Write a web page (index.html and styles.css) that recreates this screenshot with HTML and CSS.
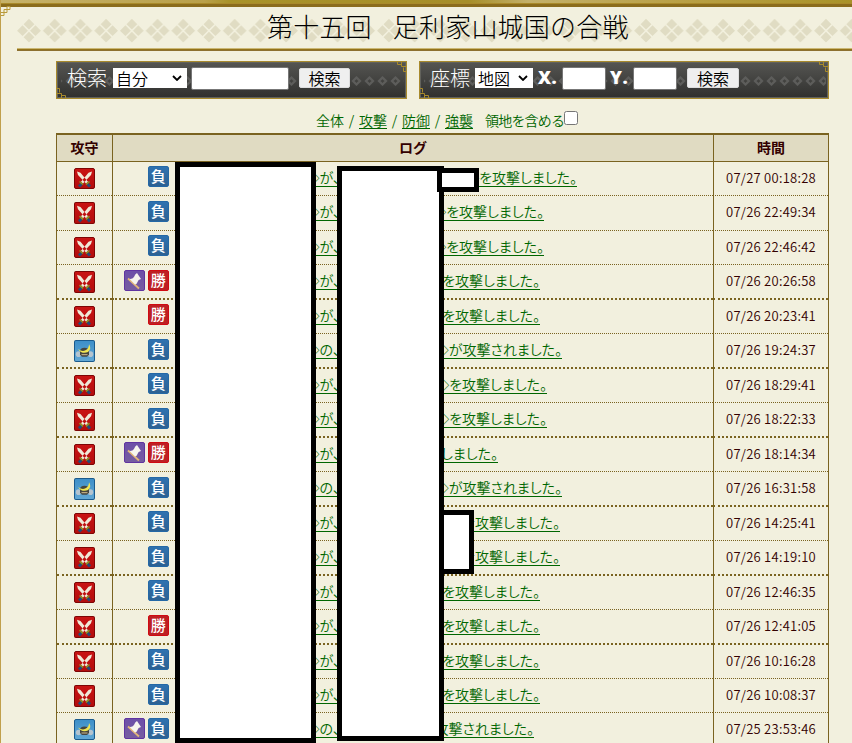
FILE: index.html
```html
<!DOCTYPE html>
<html lang="ja">
<head>
<meta charset="utf-8">
<title>合戦ログ</title>
<link rel="stylesheet" href="styles.css">
</head>
<body>
<svg width="0" height="0" class="defs" aria-hidden="true">
  <defs>
    <linearGradient id="gr" x2="0" y2="1"><stop stop-color="#c91414"/><stop offset="1" stop-color="#b30d0d"/></linearGradient>
    <linearGradient id="gb" x2="0" y2="1"><stop stop-color="#3d8fc8"/><stop offset="1" stop-color="#62a8d4"/></linearGradient>
    <linearGradient id="gp" x2="0" y2="1"><stop stop-color="#6d4fa8"/><stop offset="1" stop-color="#765da0"/></linearGradient>
    <pattern id="crest" width="25.71" height="26" x="16.15" y="0" patternUnits="userSpaceOnUse">
      <path fill="#e0dcc3" d="M12.85 .8l5.4 5.4-5.4 5.4-5.4-5.4zM12.85 13.8l5.4 5.4-5.4 5.4-5.4-5.4zM6.4 7.3l5.4 5.4-5.4 5.4L1 12.7zM19.3 7.3l5.4 5.4-5.4 5.4-5.4-5.4z"/>
    </pattern>
    <pattern id="mini" width="13" height="12" x="3" y="0" patternUnits="userSpaceOnUse">
      <path fill="none" stroke="#5d5d5b" stroke-width="2.2" d="M6.5 2.500l3.500 3.500-3.500 3.500-3.500-3.500z"/>
    </pattern>
    <symbol id="attack" viewBox="0 0 21 21">
      <rect x=".5" y=".5" width="20" height="20" rx="1.5" fill="url(#gr)" stroke="#7d0505"/>
      <path d="M5 18.500l2.500-2.500M16 18.500l-2.500-2.500" stroke="#234b78" stroke-width="3"/>
      <path d="M3 3.500l3.500 1.200 7.500 9-2 1.800-8-8.500zM18 3.500l-3.500 1.200-7.500 9 2 1.800 8-8.500z" fill="#f0e9d8"/>
      <path d="M5.500 13.500l3.500 3M15.500 13.500l-3.500 3" stroke="#8b9626" stroke-width="1.600"/>
    </symbol>
    <symbol id="defend" viewBox="0 0 21 21">
      <rect x=".5" y=".5" width="20" height="20" rx="1.5" fill="url(#gb)" stroke="#1a5a8c"/>
      <circle cx="4.500" cy="13.500" r="2.700" fill="#b4c4cf"/><circle cx="16.500" cy="13.500" r="2.700" fill="#b4c4cf"/>
      <path d="M6 11q0-3.500 4.500-3.500t4.500 3.500v3l-2 2h-5l-2-2z" fill="#46463f"/>
      <path d="M4 8.500q4 2.800 7 1.500 4-1.500 4-6 3 4-1 7.500-6 2.500-10-3z" fill="#f0e653"/>
      <path d="M7.500 14h6" stroke="#d0b88a"/>
    </symbol>
    <symbol id="flag" viewBox="0 0 21 21">
      <rect x=".5" y=".5" width="20" height="20" rx="1.500" fill="url(#gp)" stroke="#6034a0"/>
      <path d="M4 8.500l11 10" stroke="#e2b578" stroke-width="1.800"/>
      <path d="M5.500 9q3 .3 4.500-2 1-3 3-4l4 6q-3 .5-3.500 3-.5 2-2.500 2.500z" fill="#f7f5ee"/>
    </symbol>
    <symbol id="corner" viewBox="0 0 11 11">
      <path d="M.5 5.500h5v5h-5zM.5.5h3v4M5.500 7.500h4v3" fill="none" stroke="#a88a2c"/>
    </symbol>
  </defs>
</svg>
<div class="page">
  <header class="title">
    <svg class="crests" width="852" height="26" aria-hidden="true"><rect x="17" width="835" height="26" fill="url(#crest)"/></svg>
    <svg class="page-corner" viewBox="0 0 11 11" aria-hidden="true"><path d="M.5 6.500h3.500v3h-3.500M4 6.500v-3h3v3h-3M7 3.500v-3h3v3z" fill="none" stroke="#b99a3a"/></svg>
    <h1>第十五回<span class="wide"></span>足利家山城国の合戦</h1>
  </header>
  <div class="panels">
    <form class="panel search">
      <svg class="minis" aria-hidden="true"><rect width="100%" height="12" fill="url(#mini)"/></svg>
      <svg class="c bl"><use href="#corner"/></svg><svg class="c tr"><use href="#corner"/></svg>
      <span class="label">検索</span>
      <span class="select">自分<svg viewBox="0 0 10 6"><path d="M1 1l4 4 4-4"/></svg></span>
      <input class="field" aria-label="検索">
      <button type="button">検索</button>
    </form>
    <form class="panel coords">
      <svg class="minis" aria-hidden="true"><rect width="100%" height="12" fill="url(#mini)"/></svg>
      <svg class="c bl"><use href="#corner"/></svg><svg class="c tr"><use href="#corner"/></svg>
      <span class="label">座標</span>
      <span class="select">地図<svg viewBox="0 0 10 6"><path d="M1 1l4 4 4-4"/></svg></span>
      <b class="axis">X.</b><input class="field" aria-label="X">
      <b class="axis">Y.</b><input class="field" aria-label="Y">
      <button type="button">検索</button>
    </form>
  </div>
  <nav class="filter"><span>全体</span><i>/</i><u>攻撃</u><i>/</i><u>防御</u><i>/</i><u>強襲</u><label>領地を含める<input type="checkbox"></label></nav>
  <div class="log" id="log">
    <div class="row head"><div>攻守</div><div>ログ</div><div>時間</div></div>
  </div>
  <div class="mask m1"></div><div class="mask m2"></div><div class="mask m3"></div><div class="mask m4"></div>
</div>
<script src="log.js"></script>
</body>
</html>
```
FILE: styles.css
```css
* { box-sizing: border-box; }
body { margin: 0; background: #f2f0de; color: #300; font-family: "Noto Sans CJK JP", sans-serif; font-weight: 350; overflow: hidden; }
.defs { position: absolute; }
.page { position: relative; height: 743px; overflow: hidden; border-left: 1px solid #c0a04c; }
.title { position: relative; height: 51px; margin-left: -1px; border-top: 7px solid #8b6c1c; }
.title::before { content: ""; position: absolute; top: -7px; left: 0; right: 0; height: 3px; background: linear-gradient(90deg, #c6b26a 0, #b9a04a 24%, #a89228 27%, #a68e28 55%, #c3b06a 62%, #b9a045 80%, #a89228 100%); border-bottom: 1px solid #a98a2a; }
.title::after { content: ""; position: absolute; left: 17px; right: 0; bottom: 0; height: 3px; background: linear-gradient(#cbb875 33%, #94731a 33% 67%, #8c7030 67%); }
.crests { position: absolute; left: 0; top: 11px; }
.page-corner { position: absolute; left: 0; top: -1px; width: 11px; height: 11px; }
h1 { position: relative; display: flex; margin: 0; padding-left: 267px; font-size: 26px; font-weight: 300; line-height: 38px; letter-spacing: .2px; color: #000; white-space: nowrap; }
.wide { width: 21px; }
.panels { display: grid; grid-template-columns: 351px 410px; gap: 12px; margin: 10px 0 0 55px; }
.panel { position: relative; display: flex; align-items: flex-start; height: 38px; padding: 5px 0 0 9px; border: 1px solid #a88a2c; background: linear-gradient(#555552, #30302e); box-shadow: inset 0 0 0 1px #62625c; }
.panel > * { position: relative; flex: none; }
.panel > .minis { position: absolute; left: 4px; top: 13px; width: calc(100% - 6px); height: 12px; }
.panel > .c { position: absolute; width: 11px; height: 11px; }
.panel > .bl { left: -1px; bottom: -1px; }
.panel > .tr { right: -1px; top: -1px; transform: rotate(180deg); }
.label { width: 40px; margin-left: 1px; font-size: 20px; font-weight: 300; line-height: 22px; color: #fff; }
.select { display: flex; align-items: center; justify-content: space-between; width: 74px; height: 20px; margin: 1px 4px 0 6px; padding: 0 5px 0 3px; background: #fff; color: #000; font-size: 16px; line-height: 18px; }
.select svg { width: 10px; height: 6px; fill: none; stroke: #000; stroke-width: 1.8; }
.coords .select { width: 58px; margin-left: 5px; }
.field { width: 98px; height: 23px; padding: 0; border: 1px solid #777; border-radius: 2px; background: #fff; }
.coords .field { width: 44px; }
button { width: 51px; height: 20px; margin: 1px 0 0 10px; padding: 0; border: 1px solid #ddd; border-radius: 2px; background: #efefef; font: 350 16px/16px "Noto Sans CJK JP", sans-serif; color: #000; }
.coords button { width: 52px; }
.axis { width: 25px; padding-left: 1px; font: 800 18px/20px "Open Sans", sans-serif; color: #fff; letter-spacing: .5px; }
.field + .axis { width: 27px; padding-left: 4px; }
.filter { display: flex; align-items: center; height: 34px; padding: 7px 0 0 315px; color: #060; font-size: 14px; line-height: 20px; white-space: nowrap; }
.filter i { width: 15px; text-align: center; font-style: normal; }
.filter u { text-underline-offset: 2px; }
.filter label { display: flex; margin-left: 12px; letter-spacing: -.8px; }
.filter input { width: 14px; height: 14px; margin: 1px 0 0 0; }
.log { width: 773px; margin-left: 55px; border: 1px solid #7a6320; border-width: 2px 1px 0; }
.row { display: grid; grid-template-columns: 55px 601px 1fr; height: 34px; --line: 1px dotted #7a6320; }
.row:nth-child(odd) { height: 35px; }
.row:nth-child(16), .row:nth-child(17) { height: 34px; }
.row > div { border-bottom: var(--line); }
.row > div + div { border-left: 1px solid #7a6320; }
.row.thick { --line: 2px dotted #7a6320; }
.row.head { height: 27px; --line: 1px solid #7a6320; background: #e0dbc2; font-size: 14px; font-weight: 700; line-height: 24px; text-align: center; }
.side { padding: 6px 0 0 17px; }
.side svg, .flag { display: block; width: 21px; height: 21px; }
.row:nth-child(odd) .side svg { height: 22px; }
.entry { display: flex; }
.badges { display: flex; justify-content: flex-end; gap: 3px; width: 56px; margin-right: 139px; padding-top: 4px; }
.row:nth-child(odd) .badges, .row:nth-child(18) .badges { padding-top: 5px; }
.badge { width: 21px; height: 21px; border: 1px solid #2468a6; border-radius: 2px; background: linear-gradient(#2f72b0, #2d6192); color: #fff; font-size: 15px; font-weight: 500; line-height: 18px; text-align: center; text-indent: -.5px; }
.badge.win { border-color: #d00a12; background: #bd2024; }
.entry u { font-size: 14px; line-height: 31px; color: #060; white-space: nowrap; text-underline-offset: 3px; font-feature-settings: "palt"; }
.actor { width: 32px; display: flex; justify-content: flex-end; }
.result { display: flex; justify-content: flex-end; margin-left: 1px; }
.time { font-size: 13px; line-height: 32px; text-align: center; white-space: nowrap; letter-spacing: .25px; }
.mask { position: absolute; background: #fff; border: 5px solid #000; }
.m1 { left: 174px; top: 162px; width: 141px; height: 581px; }
.m2 { left: 336px; top: 166px; width: 107px; height: 575px; }
.m3 { left: 436px; top: 168px; width: 42px; height: 24px; }
.m4 { left: 438px; top: 510px; width: 35px; height: 64px; }
```
FILE: log.js
```js
// [side, flag, result, actor text, message, message width, time]
const rows = [
  ["attack", 0, "負", "が、", "◇を攻撃しました。", 236, "07/27 00:18:28"],
  ["attack", 0, "負", "が、", "◇を攻撃しました。", 203, "07/26 22:49:34"],
  ["attack", 0, "負", "が、", "◇を攻撃しました。", 203, "07/26 22:46:42"],
  ["attack", 1, "勝", "が、", "を攻撃しました。", 199, "07/26 20:26:58"],
  ["attack", 0, "勝", "が、", "を攻撃しました。", 199, "07/26 20:23:41"],
  ["defend", 0, "負", "の、", "◇が攻撃されました。", 221, "07/26 19:24:37"],
  ["attack", 0, "負", "が、", "◇を攻撃しました。", 206, "07/26 18:29:41"],
  ["attack", 0, "負", "が、", "◇を攻撃しました。", 206, "07/26 18:22:33"],
  ["attack", 1, "勝", "が、", "を攻撃しました。", 157, "07/26 18:14:34"],
  ["defend", 0, "負", "の、", "◇が攻撃されました。", 221, "07/26 16:31:58"],
  ["attack", 0, "負", "が、", "を攻撃しました。", 219, "07/26 14:25:41"],
  ["attack", 0, "負", "が、", "を攻撃しました。", 219, "07/26 14:19:10"],
  ["attack", 0, "負", "が、", "を攻撃しました。", 199, "07/26 12:46:35"],
  ["attack", 0, "勝", "が、", "を攻撃しました。", 199, "07/26 12:41:05"],
  ["attack", 0, "負", "が、", "を攻撃しました。", 199, "07/26 10:16:28"],
  ["attack", 0, "負", "が、", "を攻撃しました。", 199, "07/26 10:08:37"],
  ["defend", 1, "負", "の、", "が攻撃されました。", 193, "07/25 23:53:46"]
];
document.getElementById("log").insertAdjacentHTML("beforeend", rows.map(([side, flag, res, actor, msg, w, time], i) => `
  <div class="row${i % 2 && i > 2 && i < 14 ? " thick" : ""}">
    <div class="side"><svg viewBox="0 0 21 21" preserveAspectRatio="none"><use href="#${side}"/></svg></div>
    <div class="entry">
      <span class="badges">${flag ? '<svg class="flag"><use href="#flag"/></svg>' : ""}<span class="badge${res === "勝" ? " win" : ""}">${res}</span></span>
      <u class="actor">◇${actor}</u><u class="result" style="width:${w}px">${msg}</u>
    </div>
    <div class="time">${time}</div>
  </div>`).join(""));
```
